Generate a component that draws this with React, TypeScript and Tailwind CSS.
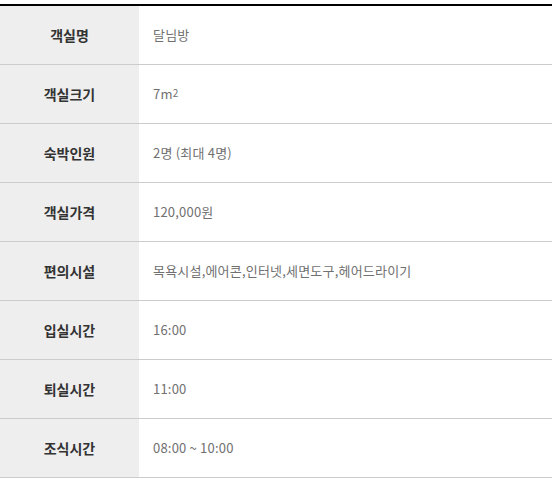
import React from 'react';

const rows: { label: string; value: React.ReactNode }[] = [
  { label: '객실명', value: '달님방' },
  { label: '객실크기', value: <>7m<sup className="text-[10px] relative -top-[2px]">2</sup></> },
  { label: '숙박인원', value: '2명 (최대 4명)' },
  { label: '객실가격', value: '120,000원' },
  { label: '편의시설', value: '목욕시설,에어콘,인터넷,세면도구,헤어드라이기' },
  { label: '입실시간', value: '16:00' },
  { label: '퇴실시간', value: '11:00' },
  { label: '조식시간', value: '08:00 ~ 10:00' },
];

export default function App() {
  return (
    <div className="bg-white w-[555px] h-[483px] pt-[4px] font-['Noto_Sans_CJK_KR',sans-serif]">
      <div className="w-[552px] border-t-2 border-black">
        {rows.map((row) => (
          <div key={row.label} className="flex h-[59px] border-b border-[#cccccc]">
            <div className="w-[139px] shrink-0 bg-[#eeeeee] flex items-center justify-center text-[14px] font-bold text-[#333333]">
              {row.label}
            </div>
            <div className="flex-1 flex items-center pl-[14px] text-[13px] text-[#707070] tracking-[0.2px]">
              <span>{row.value}</span>
            </div>
          </div>
        ))}
      </div>
    </div>
  );
}
